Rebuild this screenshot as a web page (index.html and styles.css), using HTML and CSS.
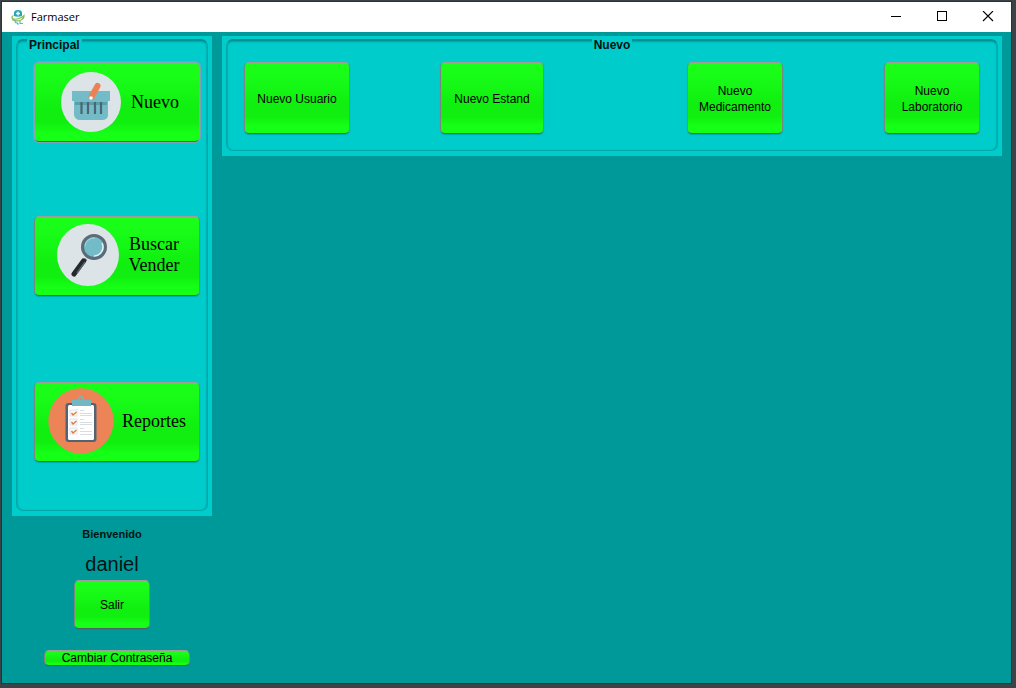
FILE: index.html
```html
<!DOCTYPE html>
<html lang="es">
<head>
<meta charset="utf-8">
<meta name="viewport" content="width=device-width, initial-scale=1">
<title>Farmaser</title>
<link rel="stylesheet" href="styles.css">
</head>
<body>
<div class="window">
  <header class="titlebar">
    <svg class="app-icon" width="14" height="16" viewBox="0 0 14 16" aria-hidden="true">
      <path d="M3 7V4Q3 1 7 1T11 4V7Q7 8.500 3 7Z" fill="#27a5bd"/>
      <path d="M7 2.500V6.500M5 4.500H9" stroke="#fff" stroke-width="1.3"/>
      <path d="M2.500 6.500Q0 8 1.500 9.500Q4 11 8 9.500Q12 8 13 6.500Q13.500 9 10 11Q5 13 1 10.500" fill="none" stroke="#86bd51" stroke-width="1.2"/>
      <path d="M4 11.500Q4 14 6 14H7M9 12V14.500H12M6 15H8" fill="none" stroke="#54bdca" stroke-width="1.2"/>
    </svg>
    <h1 class="app-title">Farmaser</h1>
    <div class="window-controls">
      <button class="control" type="button" aria-label="Minimizar"><svg width="12" height="12" viewBox="0 0 12 12"><path d="M1 5.500H11" stroke="#000" fill="none"/></svg></button>
      <button class="control" type="button" aria-label="Maximizar"><svg width="12" height="12" viewBox="0 0 12 12"><rect x="1.500" y="0.500" width="9" height="9" stroke="#000" fill="none"/></svg></button>
      <button class="control" type="button" aria-label="Cerrar"><svg width="12" height="12" viewBox="0 0 12 12"><path d="M1 0L11 10M11 0L1 10" stroke="#000" stroke-width="1.1" fill="none"/></svg></button>
    </div>
  </header>
  <div class="content">
    <aside class="sidebar">
      <section class="panel" aria-labelledby="principal">
        <div class="group group-main">
          <h2 class="group-title" id="principal">Principal</h2>
          <nav class="main-menu">
            <button class="button menu-button focused" type="button">
              <svg width="60" height="60" viewBox="0 0 60 60" aria-hidden="true">
                <circle cx="30" cy="30" r="30" fill="#dce4e8"/>
                <path d="M13 28H47V44Q46 48 41 48H19Q14 48 13 43Z" fill="#73bcc7"/>
                <path d="M11 19H49V29H47L46 31H14L13 29H11Z" fill="#73bcc7"/>
                <path d="M14 30H46V33H14Z" fill="#579faa"/>
                <path d="M20.500 30V42M27 30V42M34 30V42M40 30V42" stroke="#4d6572" stroke-width="2.200"/>
                <path d="M30.500 25L36.500 14" stroke="#ec8154" stroke-width="6" stroke-linecap="round"/>
                <circle cx="30" cy="26" r="1.800" fill="#fff"/>
              </svg>
              <span>Nuevo</span>
            </button>
            <button class="button menu-button search-button" type="button">
              <svg width="62" height="62" viewBox="0 0 62 62" aria-hidden="true">
                <circle cx="31" cy="31" r="31" fill="#dce4e8"/>
                <path d="M29 35L26 39" stroke="#59636d" stroke-width="3"/>
                <path d="M26.500 37L17 50" stroke="#24292e" stroke-width="5" stroke-linecap="round"/>
                <path d="M28 38L20 49" stroke="#596670" stroke-width="1.500"/>
                <circle cx="37" cy="23" r="11.500" fill="#73bcc7" stroke="#5b6b78" stroke-width="3"/>
                <path d="M45 19A9 9 0 0 1 37 32" fill="none" stroke="#e1f2f6" stroke-width="1.500"/>
                <path d="M28 22A9 9 0 0 1 38 14" fill="none" stroke="#a6d6de" stroke-width="1"/>
              </svg>
              <span>Buscar<br>Vender</span>
            </button>
            <button class="button menu-button report-button" type="button">
              <svg width="66" height="66" viewBox="0 0 66 66" aria-hidden="true">
                <circle cx="33" cy="33" r="32.700" fill="#ed8458"/>
                <rect x="17.500" y="15" width="31" height="39" rx="3" fill="#526474"/>
                <rect x="20" y="17" width="26" height="35" rx="1.500" fill="#fff"/>
                <path d="M24 12H30Q30 8 33 8T36 12H43V18H24Z" fill="#72b8c2"/>
                <circle cx="33" cy="11" r="1.300" fill="#ed8458"/>
                <g fill="#f8f9f9" stroke="#e2e6e8" stroke-width="1">
                  <rect x="22" y="22" width="7" height="6"/><rect x="22" y="31" width="7" height="6"/><rect x="22" y="40" width="7" height="6"/>
                </g>
                <path d="M23.500 25L25 27L28.500 24M23.500 34L25 36L28.500 33M23.500 43L25 45L28.500 42" fill="none" stroke="#e07b40" stroke-width="1.400"/>
                <path d="M32 22.500H36M32 25.500H44M32 27.500H44M32 31.500H36M32 34.500H44M32 36.500H44M32 40.500H36M32 43.500H44M32 46.500H44" stroke="#d8dee0"/>
              </svg>
              <span>Reportes</span>
            </button>
          </nav>
        </div>
      </section>
      <section class="account">
        <p class="welcome">Bienvenido</p>
        <p class="user">daniel</p>
        <button class="button logout" type="button">Salir</button>
        <button class="button password" type="button">Cambiar Contraseña</button>
      </section>
    </aside>
    <main class="main">
      <section class="panel" aria-labelledby="nuevo">
        <div class="group">
          <h2 class="group-title centered" id="nuevo">Nuevo</h2>
          <div class="actions">
            <button class="button action action-user" type="button">Nuevo Usuario</button>
            <button class="button action action-stand" type="button">Nuevo Estand</button>
            <button class="button action action-drug" type="button">Nuevo Medicamento</button>
            <button class="button action action-lab" type="button">Nuevo Laboratorio</button>
          </div>
        </div>
      </section>
    </main>
  </div>
</div>
</body>
</html>
```
FILE: styles.css
```css
* {
  box-sizing: border-box;
}

body {
  margin: 0;
  min-height: 100vh;
  display: flex;
  padding: 2px 5px 5px 2px;
  background: #3c4347;
  color: #001414;
  font: 12px/16px "Liberation Sans", Arial, sans-serif;
}

h1, h2, p {
  margin: 0;
}

button {
  margin: 0;
  font: inherit;
  color: #000;
}

svg {
  display: block;
  flex: none;
}

.window {
  flex: 1;
  display: flex;
  flex-direction: column;
  background: #009999;
  box-shadow: 0 0 0 1px #2b3235;
}

.titlebar {
  display: flex;
  align-items: center;
  height: 30px;
  padding-left: 9px;
  background: #fff;
}

.app-title {
  margin-left: 6px;
  font: 11px/16px "Open Sans", "Noto Sans", sans-serif;
  color: #000;
}

.window-controls {
  display: flex;
  align-self: stretch;
  margin-left: auto;
}

.control {
  display: grid;
  place-items: center;
  width: 46px;
  padding: 0;
  border: 0;
  background: none;
}

.content {
  flex: 1;
  display: flex;
  gap: 10px;
  padding: 4px 9px 16px 10px;
}

.sidebar {
  width: 200px;
  flex: none;
}

.main {
  flex: 1;
  min-width: 0;
}

.panel {
  padding: 3px 4px 5px;
  background: #00cccc;
}

.group {
  height: 112px;
  border: 1px solid #00a8aa;
  border-top: 2px solid #008f91;
  border-radius: 7px;
  box-shadow: inset 0 1px 2px #00a3a5, inset 1px 0 1px #00b5b7, inset -1px 0 1px #00b5b7;
}

.group-main {
  height: 472px;
}

.group-title {
  width: max-content;
  height: 15px;
  margin: -3px 0 0 10px;
  padding: 0 2px;
  background: #00cccc;
  font-size: 12px;
  line-height: 15px;
  color: #001010;
}

.centered {
  margin-left: auto;
  margin-right: auto;
}

.main-menu {
  padding: 9px 7px 0 17px;
}

.button {
  padding: 0;
  border: 1px solid;
  border-color: #a19b9b #7d8484 #4e6262 #7d8484;
  border-radius: 5px;
  background: linear-gradient(#1aff1a 0%, #18fc18 20%, #10ef10 60%, #10ef10 76%, #16ff16 90%, #16ff16 100%);
  box-shadow: 0 1px 1px #00898980;
}

.menu-button {
  display: flex;
  align-items: center;
  justify-content: center;
  gap: 10px;
  width: 100%;
  height: 80px;
  padding-left: 6px;
  font: 18px/21px "Liberation Serif", "Times New Roman", serif;
}

.focused {
  border-color: #8ba5b5 #8ba5b5 #4e6262;
  box-shadow: 0 0 0 1px #839cbc;
}

.search-button {
  margin-top: 74px;
  padding: 0 0 2px 2px;
}

.report-button {
  margin-top: 86px;
  padding: 0 0 2px;
  gap: 8px;
}

.account {
  display: flex;
  flex-direction: column;
  align-items: center;
  padding-top: 10px;
}

.welcome {
  font-size: 11px;
  font-weight: bold;
}

.user {
  margin-top: 9px;
  font-size: 20px;
  line-height: 26px;
}

.logout {
  width: 76px;
  height: 49px;
  margin-top: 3px;
}

.password {
  width: 146px;
  height: 16px;
  margin: 21px 0 0 10px;
  line-height: 14px;
}

.actions {
  display: grid;
  grid-template-columns: 106px 90fr 104px 143fr 96px 101fr 96px;
  padding: 9px 17px 0;
}

.action {
  height: 72px;
  padding: 2px 8px 0;
}

.action-user {
  grid-column: 1;
}

.action-stand {
  grid-column: 3;
}

.action-drug {
  grid-column: 5;
}

.action-lab {
  grid-column: 7;
}
```
